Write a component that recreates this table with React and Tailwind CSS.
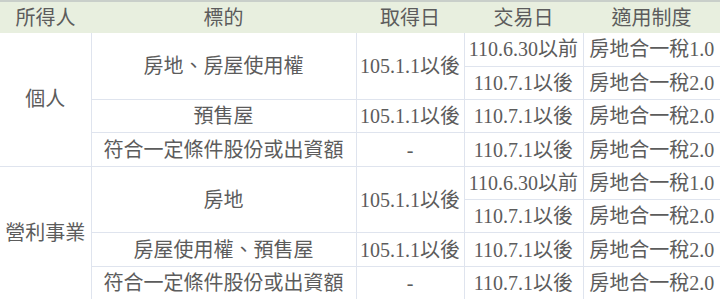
import React from 'react';

const rows = [
  { owner: '個人', ownerSpan: 4, item: '房地、房屋使用權', itemSpan: 2, acquire: '105.1.1以後', trade: '110.6.30以前', system: '房地合一稅1.0' },
  { trade: '110.7.1以後', system: '房地合一稅2.0' },
  { item: '預售屋', itemSpan: 1, acquire: '105.1.1以後', trade: '110.7.1以後', system: '房地合一稅2.0' },
  { item: '符合一定條件股份或出資額', itemSpan: 1, acquire: '-', trade: '110.7.1以後', system: '房地合一稅2.0' },
  { owner: '營利事業', ownerSpan: 4, item: '房地', itemSpan: 2, acquire: '105.1.1以後', trade: '110.6.30以前', system: '房地合一稅1.0' },
  { trade: '110.7.1以後', system: '房地合一稅2.0' },
  { item: '房屋使用權、預售屋', itemSpan: 1, acquire: '105.1.1以後', trade: '110.7.1以後', system: '房地合一稅2.0' },
  { item: '符合一定條件股份或出資額', itemSpan: 1, acquire: '-', trade: '110.7.1以後', system: '房地合一稅2.0' },
];

const cell = 'border-b border-l border-[#dfe4ee] p-0 text-center align-middle whitespace-nowrap';

export default function App() {
  return (
    <div className="w-[720px] h-[299px] overflow-hidden bg-white">
      <table
        className="w-[720px] h-[300px] table-fixed border-collapse border-t-2 border-[#c9cfca] text-[20px] leading-none text-[#5c5c5c]"
        style={{ fontFamily: '"Liberation Serif", "Noto Sans CJK TC", serif' }}
      >
        <colgroup>
          <col className="w-[91px]" />
          <col className="w-[265px]" />
          <col className="w-[108px]" />
          <col className="w-[119px]" />
          <col className="w-[137px]" />
        </colgroup>
        <thead>
          <tr className="h-[32px] bg-[#e8efdf]">
            <th className="p-0 font-normal">所得人</th>
            <th className="p-0 font-normal">標的</th>
            <th className="p-0 font-normal">取得日</th>
            <th className="p-0 font-normal">交易日</th>
            <th className="p-0 font-normal">適用制度</th>
          </tr>
        </thead>
        <tbody>
          {rows.map((r, i) => (
            <tr key={i} className="h-[33px]">
              {r.owner && (
                <td rowSpan={r.ownerSpan} className="border-b border-[#dfe4ee] p-0 text-center align-middle">
                  {r.owner}
                </td>
              )}
              {r.item && (
                <td rowSpan={r.itemSpan} className={cell}>{r.item}</td>
              )}
              {r.acquire && (
                <td rowSpan={r.itemSpan} className={cell}>{r.acquire}</td>
              )}
              <td className={cell}>{r.trade}</td>
              <td className={cell}>{r.system}</td>
            </tr>
          ))}
        </tbody>
      </table>
    </div>
  );
}
